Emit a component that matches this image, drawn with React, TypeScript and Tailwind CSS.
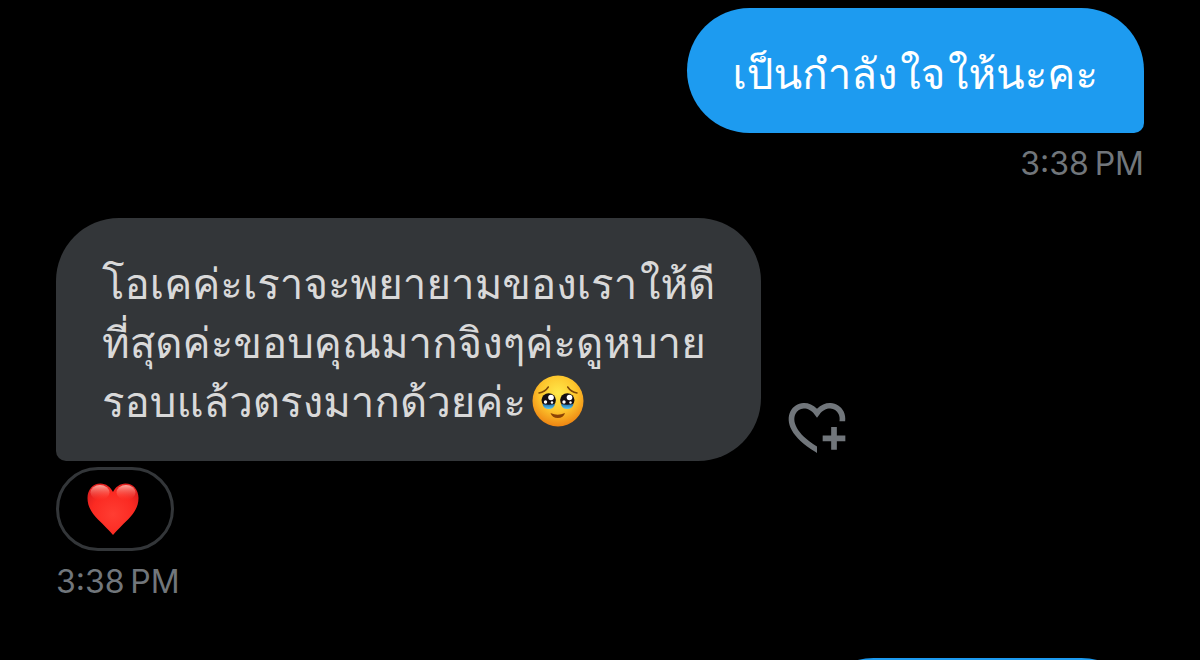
import React from 'react';

interface MessageTimeProps {
  children: React.ReactNode;
}

const MessageTime: React.FC<MessageTimeProps> = ({ children }) => (
  <time className="mt-[11px] text-[32px] leading-10 text-[#71767b] font-[Inter,sans-serif]">
    {children}
  </time>
);

const HoldingTearsFace = () => (
  <svg viewBox="0 0 52 52" className="-my-2 ml-1.5 inline-block h-[52px] w-[52px] align-[-2px]" role="img" aria-label="face holding back tears">
    <defs>
      <radialGradient id="face" cx="0.5" cy="0.35" r="0.65">
        <stop offset="0" stopColor="#ffe94a" />
        <stop offset="0.55" stopColor="#fdc52c" />
        <stop offset="1" stopColor="#ee8412" />
      </radialGradient>
      <linearGradient id="tear" x1="0" y1="0" x2="0" y2="1">
        <stop offset="0" stopColor="#1f6fae" />
        <stop offset="1" stopColor="#5cc8f2" />
      </linearGradient>
    </defs>
    <circle cx="26" cy="26" r="25.5" fill="url(#face)" />
    <path d="M7 18q6-1 9.3-6M45 18q-6-1-9.3-6" fill="none" stroke="#7d4608" strokeWidth="1.5" strokeLinecap="round" />
    <ellipse cx="16.7" cy="25" rx="7.2" ry="6.8" fill="#140d12" />
    <ellipse cx="35.3" cy="25" rx="7.2" ry="6.8" fill="#140d12" />
    <path d="M10.5 29q6 1.5 12.5 0q-1 5-6.3 5t-6.2-5zM29 29q6 1.5 12.5 0q-1 5-6.3 5t-6.2-5z" fill="url(#tear)" />
    <circle cx="19" cy="22.5" r="2.8" fill="#fff" />
    <circle cx="13.5" cy="27" r="1.7" fill="#fff" />
    <circle cx="20" cy="27.5" r="1.2" fill="#fff" />
    <circle cx="37.5" cy="22.5" r="2.8" fill="#fff" />
    <circle cx="32" cy="27" r="1.7" fill="#fff" />
    <circle cx="38.5" cy="27.5" r="1.2" fill="#fff" />
    <path d="M18.5 38q7 3.5 14.5 0q-1.5 5-7.2 5t-7.3-5z" fill="#8a4306" />
  </svg>
);

const RedHeart = () => (
  <svg viewBox="0 0 52 52" className="h-[52px] w-[52px]" role="img" aria-label="red heart">
    <defs>
      <radialGradient id="heart" cx="0.5" cy="0.6" r="0.6">
        <stop offset="0" stopColor="#ff3d32" />
        <stop offset="0.7" stopColor="#fb2a22" />
        <stop offset="1" stopColor="#e2201f" />
      </radialGradient>
      <linearGradient id="shine" x1="0" y1="0" x2="0" y2="1">
        <stop offset="0" stopColor="#ffb9ad" stopOpacity="0.9" />
        <stop offset="1" stopColor="#ff4b3e" stopOpacity="0" />
      </linearGradient>
    </defs>
    <path d="M26 9C23.5 4 19 0.5 13.5 0.5C6 0.5 0.5 6.5 0.5 15C0.5 24 5 30 11 36.5C16.5 42 22.5 47.5 26 52C29.5 47.5 35.5 42 41 36.5C47 30 51.5 24 51.5 15C51.5 6.5 46 0.5 38.5 0.5C33 0.5 28.5 4 26 9z" fill="url(#heart)" />
    <ellipse cx="13" cy="9.5" rx="9.5" ry="7.5" fill="url(#shine)" />
    <ellipse cx="39" cy="9.5" rx="9.5" ry="7.5" fill="url(#shine)" />
  </svg>
);

const AddReactionButton = () => (
  <button type="button" aria-label="Add reaction" className="shrink-0 text-[#71767b]">
    <svg viewBox="0 0 24 24" className="h-[68px] w-[68px]" fill="currentColor" aria-hidden="true">
      <path d="M17 12v3h-2.998v2h3v3h2v-3h3v-2h-3.001v-3H17zm-5 6.839c-3.871-2.34-6.053-4.639-7.127-6.609-1.112-2.04-1.031-3.7-.479-4.82.561-1.13 1.667-1.84 2.91-1.91 1.222-.06 2.68.51 3.892 2.16l.806 1.09.805-1.09c1.211-1.65 2.668-2.22 3.89-2.16 1.242.07 2.347.78 2.908 1.91.334.677.49 1.554.321 2.59h2.011c.153-1.283-.039-2.469-.539-3.48-.887-1.79-2.647-2.91-4.601-3.01-1.65-.09-3.367.56-4.796 2.01-1.43-1.45-3.147-2.1-4.798-2.01-1.954.1-3.714 1.22-4.601 3.01-.896 1.81-.846 4.17.514 6.67 1.353 2.48 4.003 5.12 8.382 7.67l.502.299v-2.32z" />
    </svg>
  </button>
);

export default function App() {
  return (
    <main className="flex h-screen flex-col overflow-hidden bg-black px-14 pt-2 font-['Loma','Noto_Sans',sans-serif]">
      <section className="flex shrink-0 flex-col items-end">
        <p className="min-w-[457px] rounded-[63px] rounded-br-[10px] bg-[#1d9bf0] px-[46px] pt-[37px] pb-[29px] text-[42px] leading-[59px] text-white">
          เป็นกำลัง{'\u200a'}ใจ{'\u200a'}ให้นะคะ
        </p>
        <MessageTime>3:38{'\u202f'}PM</MessageTime>
      </section>

      <section className="mt-[34px] flex shrink-0 flex-col items-start">
        <div className="flex items-end gap-[22px]">
          <p className="min-w-[704px] whitespace-nowrap rounded-[63px] rounded-bl-[10px] bg-[#333639] px-[46px] pt-[37px] pb-[29px] text-[42px] leading-[59px] text-[#d9d9d9]">
            โอเคค่ะเราจะพยายามของเรา{'\u200a'}ให้ดี
            <br />
            ที่สุดค่ะขอบคุณมากจิงๆค่ะดูหบาย
            <br />
            รอบแล้วตรงมากด้วยค่ะ
            <HoldingTearsFace />
          </p>
          <AddReactionButton />
        </div>
        <button type="button" className="mt-1.5 flex h-[84px] w-[118px] items-center justify-center rounded-full border-3 border-[#333639] pr-1">
          <RedHeart />
        </button>
        <MessageTime>3:38{'\u202f'}PM</MessageTime>
      </section>

      <section className="mt-14 flex shrink-0 flex-col items-end">
        <div className="h-[125px] w-[333px] rounded-[63px] rounded-br-[10px] bg-[#1d9bf0]" />
      </section>
    </main>
  );
}
